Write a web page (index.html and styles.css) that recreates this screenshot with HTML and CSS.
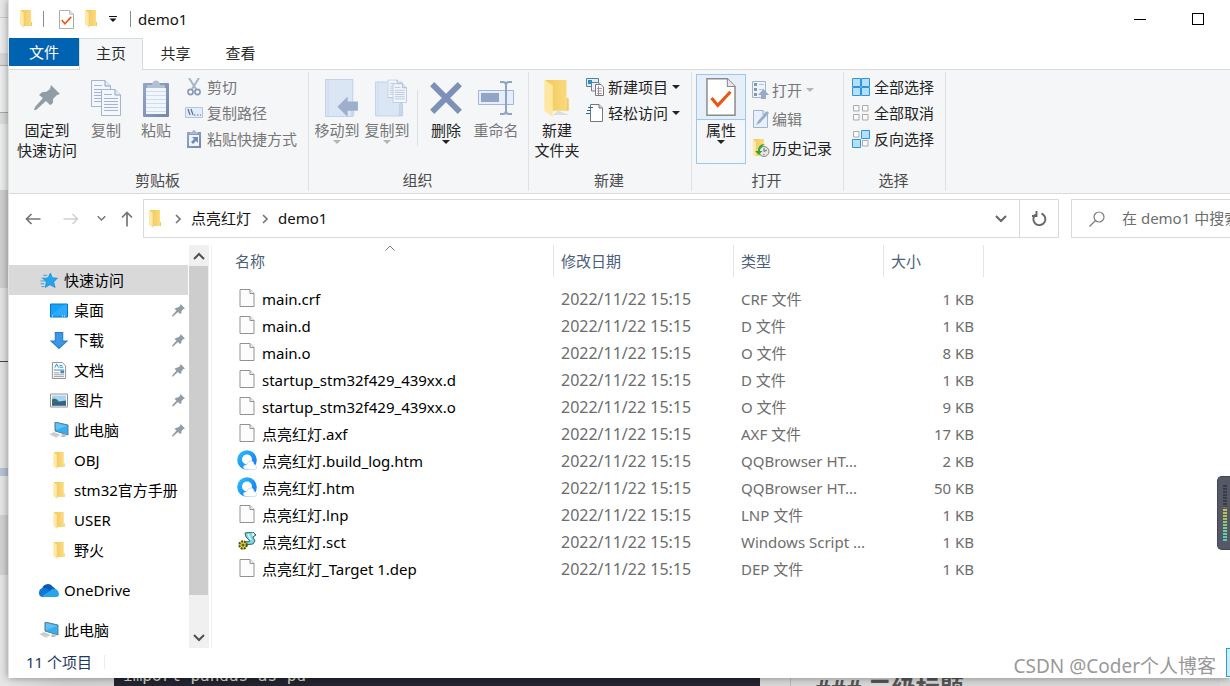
FILE: index.html
```html
<!DOCTYPE html>
<html lang="zh-CN">
<head>
<meta charset="utf-8">
<title>demo1</title>
<link rel="stylesheet" href="styles.css">
</head>
<body>
<svg class="sprite" aria-hidden="true">
  <defs>
    <linearGradient id="gold" x1="0" x2="1"><stop offset="0" stop-color="#f0c95c"/><stop offset="1" stop-color="#fbdb80"/></linearGradient>
    <linearGradient id="steel" x1="0" y1="0" x2="1" y2="1"><stop offset="0" stop-color="#93a6ca"/><stop offset="1" stop-color="#7488ae"/></linearGradient>
    <linearGradient id="qq" x1="0" y1="0" x2="1" y2="1"><stop offset="0" stop-color="#2fc0fa"/><stop offset="1" stop-color="#1272ec"/></linearGradient>
    <symbol id="folder" viewBox="0 0 14 18"><path d="M2 0H12V16H4Z" fill="url(#gold)"/><path d="M12 12h1v4h-1z" fill="#f0cb62"/><path d="M1 0L5 3V18L1 15Z" fill="#ffe9a8"/><path d="M5 3V17" stroke="#edca69" stroke-width=".6"/></symbol>
    <symbol id="pin" viewBox="0 0 26 26"><path d="M17 0L26 9L23 10L19 14Q20 19 16 20L12 16L2 25L0 25L1 22L9 13L5 10Q8 6 12 7L16 4Z" fill="#929ca4"/></symbol>
    <symbol id="checkdoc" viewBox="0 0 28 36"><path d="M.7.7H20L27.3 8V35.3H.7Z" fill="#fff" stroke="#8a8a8a" stroke-width="1.4"/><path d="M20 .7V8H27.3" fill="#e6e6e6" stroke="#8a8a8a"/><path d="M5 19L11 26L23 13" fill="none" stroke="#ea5712" stroke-width="3"/></symbol>
    <symbol id="page" viewBox="0 0 20 27"><path d="M.5.5H14L19.500 6V26.500H.5Z" fill="#f4f8fe" stroke="#a4b3ce"/><path d="M14 .5V6H19.500" fill="#e3ebf7" stroke="#8ea0c2"/><path d="M3 5.500H11M3 9.500H17M3 12.500H17M3 15.500H17M3 18.500H17M3 21.500H17" stroke="#a3b4d2"/></symbol>
    <symbol id="copy" viewBox="0 0 30 36"><use href="#page" width="20" height="27"/><use href="#page" x="10" y="9" width="20" height="27"/></symbol>
    <symbol id="paste" viewBox="0 0 26 37"><rect y="3" width="26" height="34" rx="1" fill="url(#steel)"/><path d="M3 8H23V34H3Z" fill="#f2f7fe"/><path d="M3 11.500H23M3 15.500H23M3 19.500H23M3 23.500H23M3 27.500H23M3 31.500H23" stroke="#cddcf1"/><path d="M4 8V5H9C9 -1 17 -1 17 5H22V8Z" fill="#b3bfd4"/></symbol>
    <symbol id="cut" viewBox="0 0 14 18"><path d="M2 0L9 11M12 0L5 11" stroke="#a6b3c9" stroke-width="2" fill="none"/><circle cx="3.500" cy="14" r="2.600" fill="none" stroke="#8798b9" stroke-width="1.600"/><circle cx="10.500" cy="14" r="2.600" fill="none" stroke="#8798b9" stroke-width="1.600"/></symbol>
    <symbol id="path" viewBox="0 0 18 12"><path d="M.5.5H17.500V10.500H.5Z" fill="#e2edfb" stroke="#b5c3dc"/><path d="M3 2L5 8M6 2L8 8" stroke="#5d6d8d" stroke-width="1.200"/><path d="M9 8h1.500M12 8h1.500M15 8h1" stroke="#5d6d8d"/></symbol>
    <symbol id="shortcut" viewBox="0 0 14 18"><rect y="2" width="14" height="16" fill="url(#steel)"/><path d="M2 5H12V16H2Z" fill="#eef5fe"/><path d="M3 4V2H5Q7 -2 9 2H11V4Z" fill="#a9b7d0"/><path d="M5 7H11V13L9 11L6 14L4 12L7 9Z" fill="#758bb2"/></symbol>
    <symbol id="moveto" viewBox="0 0 32 37"><path d="M.5.5H27V36.500H.5Z" fill="#dbe6f5" stroke="#c3d2e8"/><path d="M3 1V36" stroke="#ccdaee"/><path d="M25 36V24Q27 20 28.500 24V36Z" fill="#c9d7eb"/><path d="M12 27L22 17V22H32V31H22V37Z" fill="#9fafcb"/></symbol>
    <symbol id="copyto" viewBox="0 0 34 38"><path d="M.5 2.500H28V37.500H.5Z" fill="#dbe6f5" stroke="#c3d2e8"/><path d="M3 3V37" stroke="#ccdaee"/><path d="M25 37V26Q27 22 28.500 26V37Z" fill="#c9d7eb" stroke="#b6c5de" stroke-width=".5"/><use href="#page" x="13" width="14" height="19"/><use href="#page" x="18" y="4" width="15" height="20"/></symbol>
    <symbol id="delete" viewBox="0 0 32 32"><path d="M3 3L29 29M29 3L3 29" stroke="#7d91b6" stroke-width="5.500"/></symbol>
    <symbol id="rename" viewBox="0 0 36 34"><path d="M.5 9.500H35.500V23.500H.5Z" fill="#e5effb" stroke="#a5b6d4"/><path d="M3 12H21V21H3Z" fill="#93a5c6"/><path d="M22 1H25Q28 1 28 4Q28 1 31 1H34M28 4V30M22 33H25Q28 33 28 30Q28 33 31 33H34" stroke="#8fa2c4" stroke-width="2" fill="none"/></symbol>
    <symbol id="newfolder" viewBox="0 0 26 36"><path d="M14 30L25 34H9Z" fill="#dedede"/><path d="M2 1H22V28L24 19V30H9Z" fill="url(#gold)"/><path d="M22 18h2v12h-2z" fill="#eecb67"/><path d="M1 1L9 6V36L1 30Z" fill="#ffe7a0"/></symbol>
    <symbol id="newitem" viewBox="0 0 18 18"><path d="M.5.5H12.500V8.500H.5Z" fill="#d7f0fc" stroke="#5c7f97"/><path d="M2 2h4v4H2z" fill="#3189bd"/><path d="M5.500 4.500H13V13H5.500Z" fill="#e8f1f8" stroke="#70808c"/><path d="M9.500 6.500H15L17.500 9V17.500H9.500Z" fill="#fff" stroke="#777"/><path d="M11 10.500H16M11 13H16M11 15.500H16" stroke="#cf8d92"/><path d="M12.500 8V17" stroke="#7798c2"/></symbol>
    <symbol id="easy" viewBox="0 0 18 18"><path d="M4.500.5H13L16.500 4V17.500H4.500Z" fill="#fff" stroke="#777"/><path d="M13 .5V4H16.500" fill="#ddd" stroke="#777"/><path d="M2 3.500H7M1 6.500H5M0 9.500H4" stroke="#1f6ba5" stroke-width="1.200"/></symbol>
    <symbol id="open" viewBox="0 0 18 18"><path d="M.5.5H13.500V16.500H.5Z" fill="#eef4fc" stroke="#a4b2cc"/><path d="M2 2h3v3H2zM2 7h3v3H2zM2 12h3v3H2z" fill="#8396ba"/><path d="M7 3.500H12M7 8.500H11" stroke="#b3c0d8"/><path d="M11.500 8L17 14H14V18H9V14H6Z" fill="#98a9c9"/></symbol>
    <symbol id="edit" viewBox="0 0 16 18"><path d="M.5.5H10L14.500 5V17.500H.5Z" fill="#e7f0fb" stroke="#a2b3d0"/><path d="M10 .5V5H14.500" fill="#d5e1f3" stroke="#a2b3d0"/><path d="M3 15L5 11L14 1L16 3L7 13Z" fill="#9bacc9"/></symbol>
    <symbol id="history" viewBox="0 0 18 18"><path d="M1 0H12V17H3Z" fill="url(#gold)"/><path d="M1 0L4 3V18L1 16Z" fill="#ffe9a8"/><circle cx="12" cy="12.500" r="5" fill="#e6e6e6" stroke="#858585"/><path d="M12 9V12.500L15 11M9 12.500h1M12 16v-1" stroke="#666" fill="none"/><path d="M13 5Q6 5 6 12H3L7 16L10 12H8Q8 8 13 5Z" fill="#2aa83a"/></symbol>
    <symbol id="all" viewBox="0 0 18 18"><path d="M.5.5H8.500V8.500H.5ZM9.500.5H17.500V8.500H9.500ZM.5 9.500H8.500V17.500H.5ZM9.500 9.500H17.500V17.500H9.500Z" fill="#b5e0fb" stroke="#2e95dc"/></symbol>
    <symbol id="none" viewBox="0 0 18 18"><path d="M1.500 1.500H7V7H1.500ZM10.500 1.500H16V7H10.500ZM1.500 10.500H7V16H1.500ZM10.500 10.500H16V16H10.500Z" fill="#fafafa" stroke="#aaa"/></symbol>
    <symbol id="invert" viewBox="0 0 18 18"><path d="M1.500 1.500H7V7H1.500ZM10.500 10.500H16V16H10.500Z" fill="#fafafa" stroke="#aaa"/><path d="M9.500.5H17.500V8.500H9.500ZM.5 9.500H8.500V17.500H.5Z" fill="#b5e0fb" stroke="#2e95dc"/></symbol>
    <symbol id="star" viewBox="0 0 18 16"><path d="M10.500 0L12.500 5L18 5.500L14 9.500L15.500 15.500L10 12.500L5 15.500L6 10L3 6L8 5Z" fill="#22a4ee" stroke="#1685cf" stroke-width=".7"/><path d="M3 2.500H7M1 5.500H5M0 8.500H4M0 11.500H4M1 14.500H4" stroke="#2a9be0"/></symbol>
    <symbol id="desktop" viewBox="0 0 18 14"><path d="M.5.5H17.500V13.500H.5Z" fill="#17a2f9" stroke="#0676c8"/><path d="M1 12L14 1H17V12Z" fill="#37b2fb" opacity=".6"/><path d="M2 12.500H4M12 12.500H16" stroke="#fff" stroke-dasharray="1 1"/></symbol>
    <symbol id="download" viewBox="0 0 16 16"><path d="M4.500.5H11.500V8.500H15.500L8 15.500L.5 8.500H4.500Z" fill="#3997e5" stroke="#2b7cc6"/></symbol>
    <symbol id="document" viewBox="0 0 15 18"><path d="M.5.5H11L14.500 4V17.500H.5Z" fill="#fff" stroke="#8d8d8d"/><path d="M3 6L5 2L7 6M8 3.500H11M8 5.500H12M2 8.500H13" stroke="#238ccd" fill="none"/><path d="M2 11.500H8M2 13.500H13M2 15.500H13" stroke="#9a9a9a"/><path d="M9 9h4v3H9z" fill="#3c8cc0"/></symbol>
    <symbol id="picture" viewBox="0 0 18 14"><path d="M.5.5H17.500V13.500H.5Z" fill="#fff" stroke="#929292"/><path d="M2 2H16V12H2Z" fill="#a7d3f5"/><path d="M2 6Q5 3 9 8L16 7V12H2Z" fill="#396e70"/><path d="M2 10L16 8V12H2Z" fill="#35608e"/></symbol>
    <symbol id="pc" viewBox="0 0 20 17"><path d="M6 0L19 3V13L6 9Z" fill="#35afef" stroke="#627b8c"/><path d="M7 1L18 4L7 8Z" fill="#7bd0fa" opacity=".6"/><path d="M13 12L12 15L16 15L17 13Z" fill="#b6bfc6"/><path d="M0 12L5 10L12 13L7 16Z" fill="#d5dade"/><path d="M2 12L8 14M4 11L10 13" stroke="#aab1b6" stroke-width=".6"/></symbol>
    <symbol id="cloud" viewBox="0 0 20 13"><path d="M3 5A6 6 0 0 1 14 3Q17 4 17 8H2Z" fill="#0a5bb5"/><path d="M0 9Q0 4 5 4Q9 4 13 9L6 13H4Q0 13 0 9Z" fill="#0f78d4"/><path d="M3 12L11 7Q13 4 17 5Q20 7 20 10Q20 13 17 13H5Z" fill="#28a5ea"/></symbol>
    <symbol id="file" viewBox="0 0 15 18"><path d="M.5.5H10.500L14.500 4.500V17.500H.5Z" fill="#fcfcfc" stroke="#929292"/><path d="M10.500.5V4.500H14.500" fill="#eee" stroke="#929292"/></symbol>
    <symbol id="browser" viewBox="0 0 20 20"><circle cx="10" cy="10" r="9.800" fill="url(#qq)"/><circle cx="10" cy="9.500" r="5" fill="#fff"/><path d="M9 19.600Q6 19 6.500 16.500Q7 14.500 9.500 15Q11 10.500 14.500 11Q17 11.500 17 14.500Q19.700 15 19.600 17.500Q19.300 19.500 17 19.600Z" fill="#fff" stroke="#b4d5fa" stroke-width=".7"/></symbol>
    <symbol id="script" viewBox="0 0 18 18"><path d="M7 1L15 0L18 3L15 5L17 9L15 12L7 13L8 10L12 9L8 5Z" fill="#7bd7dc" stroke="#27585d" stroke-width=".9"/><path d="M10 2L13 8M15 1V4" stroke="#eaffff" stroke-width="1.500"/><circle cx="5" cy="13" r="3.700" fill="#e4db30" stroke="#4d4a13" stroke-width="2" stroke-dasharray="2 1"/><circle cx="5" cy="13" r="1.500" fill="#675f17"/></symbol>
    <symbol id="left" viewBox="0 0 16 12"><path d="M15.500 6H1.500M6.500 1L1.500 6L6.500 11" fill="none" stroke="currentColor" stroke-width="1.700"/></symbol>
    <symbol id="right" viewBox="0 0 16 12"><path d="M.5 6H14.500M9.500 1L14.500 6L9.500 11" fill="none" stroke="currentColor" stroke-width="1.500"/></symbol>
    <symbol id="up" viewBox="0 0 12 16"><path d="M6 15.500V1.500M1 6.500L6 1.500L11 6.500" fill="none" stroke="currentColor" stroke-width="1.700"/></symbol>
    <symbol id="chevron" viewBox="0 0 12 8"><path d="M1 1L6 6L11 1" fill="none" stroke="currentColor" stroke-width="2"/></symbol>
    <symbol id="thin-up" viewBox="0 0 10 6"><path d="M.5 5.500L5 1L9.500 5.500" fill="none" stroke="currentColor"/></symbol>
    <symbol id="crumb" viewBox="0 0 6 10"><path d="M1 1L5 5L1 9" fill="none" stroke="currentColor" stroke-width="1.600"/></symbol>
    <symbol id="refresh" viewBox="0 0 16 16"><path d="M10.500 2.500A6 6 0 1 1 4.500 3.500M5.500 0V5H1" fill="none" stroke="currentColor" stroke-width="1.900"/></symbol>
    <symbol id="search" viewBox="0 0 16 16"><circle cx="10" cy="6" r="5" fill="none" stroke="#7c7c7c" stroke-width="1.200"/><path d="M6.500 9.500L.5 15.500" stroke="#7c7c7c" stroke-width="1.200"/></symbol>
    <symbol id="menu" viewBox="0 0 8 6"><path d="M0 .5H8" stroke="currentColor"/><path d="M.5 2.500H7.500L4 6Z" fill="currentColor"/></symbol>
  </defs>
</svg>

<div class="backdrop" aria-hidden="true">
  <div class="edge"></div>
  <div class="code-strip"><span>import pandas as pd</span></div>
  <div class="note-strip"><span>### 二级标题</span></div>
</div>

<main class="window">
  <header class="titlebar">
    <svg class="i-folder"><use href="#folder"/></svg>
    <span class="bar"></span>
    <button class="plain" aria-label="属性"><svg class="i-tick"><use href="#checkdoc"/></svg></button>
    <button class="plain" aria-label="新建文件夹"><svg class="i-folder"><use href="#folder"/></svg></button>
    <button class="plain" aria-label="自定义"><svg class="i-menu"><use href="#menu"/></svg></button>
    <span class="bar"></span>
    <h1 class="title">demo1</h1>
    <div class="controls">
      <button class="plain" aria-label="最小化"><span class="minimise"></span></button>
      <button class="plain" aria-label="最大化"><span class="maximise"></span></button>
    </div>
  </header>

  <nav class="tabs">
    <button class="tab tab-file">文件</button>
    <button class="tab tab-on">主页</button>
    <button class="tab">共享</button>
    <button class="tab">查看</button>
  </nav>

  <section class="ribbon">
    <div class="group g-clip">
      <div class="tools">
        <button class="big wide"><span class="pic"><svg class="i-pin"><use href="#pin"/></svg></span>固定到<br>快速访问</button>
        <button class="big off"><span class="pic"><svg class="i-copy"><use href="#copy"/></svg></span>复制</button>
        <button class="big off"><span class="pic"><svg class="i-paste"><use href="#paste"/></svg></span>粘贴</button>
        <div class="stack">
          <button class="small off"><svg><use href="#cut"/></svg>剪切</button>
          <button class="small off"><svg><use href="#path"/></svg>复制路径</button>
          <button class="small off"><svg><use href="#shortcut"/></svg>粘贴快捷方式</button>
        </div>
      </div>
      <div class="caption">剪贴板</div>
    </div>
    <div class="group g-org">
      <div class="tools">
        <button class="big off"><span class="pic"><svg class="i-target"><use href="#moveto"/></svg></span>移动到<i class="caret"></i></button>
        <button class="big off"><span class="pic"><svg class="i-target"><use href="#copyto"/></svg></span>复制到<i class="caret"></i></button>
        <span class="split"></span>
        <button class="big"><span class="pic"><svg class="i-del"><use href="#delete"/></svg></span>删除<i class="caret"></i></button>
        <button class="big off"><span class="pic"><svg class="i-big"><use href="#rename"/></svg></span>重命名</button>
      </div>
      <div class="caption">组织</div>
    </div>
    <div class="group g-new">
      <div class="tools">
        <button class="big"><span class="pic"><svg class="i-big"><use href="#newfolder"/></svg></span>新建<br>文件夹</button>
        <div class="stack">
          <button class="small"><svg><use href="#newitem"/></svg>新建项目<i class="caret"></i></button>
          <button class="small"><svg><use href="#easy"/></svg>轻松访问<i class="caret"></i></button>
        </div>
      </div>
      <div class="caption">新建</div>
    </div>
    <div class="group g-open">
      <div class="tools">
        <button class="big hot"><span class="pic"><svg class="i-big"><use href="#checkdoc"/></svg></span>属性<i class="caret"></i></button>
        <div class="stack loose">
          <button class="small off"><svg><use href="#open"/></svg>打开<i class="caret"></i></button>
          <button class="small off"><svg><use href="#edit"/></svg>编辑</button>
          <button class="small"><svg><use href="#history"/></svg>历史记录</button>
        </div>
      </div>
      <div class="caption">打开</div>
    </div>
    <div class="group g-select">
      <div class="tools">
        <div class="stack">
          <button class="small"><svg><use href="#all"/></svg>全部选择</button>
          <button class="small"><svg><use href="#none"/></svg>全部取消</button>
          <button class="small"><svg><use href="#invert"/></svg>反向选择</button>
        </div>
      </div>
      <div class="caption">选择</div>
    </div>
  </section>

  <section class="location">
    <div class="history">
      <button class="plain" aria-label="后退"><svg class="i-across"><use href="#left"/></svg></button>
      <button class="plain faint" aria-label="前进"><svg class="i-across"><use href="#right"/></svg></button>
      <button class="plain" aria-label="最近"><svg class="i-down"><use href="#chevron"/></svg></button>
      <button class="plain" aria-label="向上"><svg class="i-up"><use href="#up"/></svg></button>
    </div>
    <div class="address">
      <svg class="i-folder"><use href="#folder"/></svg>
      <svg class="i-crumb"><use href="#crumb"/></svg>
      <a href="#">点亮红灯</a>
      <svg class="i-crumb"><use href="#crumb"/></svg>
      <a href="#">demo1</a>
      <button class="plain drop" aria-label="展开"><svg class="i-drop"><use href="#chevron"/></svg></button>
      <button class="plain reload" aria-label="刷新"><svg class="i-small"><use href="#refresh"/></svg></button>
    </div>
    <label class="search"><svg class="i-small"><use href="#search"/></svg><input type="text" aria-label="搜索" placeholder="在 demo1 中搜索"></label>
  </section>

  <section class="content">
    <nav class="tree">
      <a class="node root on" href="#"><svg class="inset"><use href="#star"/></svg>快速访问</a>
      <a class="node" href="#"><svg class="inset"><use href="#desktop"/></svg>桌面<svg class="pinned"><use href="#pin"/></svg></a>
      <a class="node" href="#"><svg><use href="#download"/></svg>下载<svg class="pinned"><use href="#pin"/></svg></a>
      <a class="node" href="#"><svg><use href="#document"/></svg>文档<svg class="pinned"><use href="#pin"/></svg></a>
      <a class="node" href="#"><svg class="inset"><use href="#picture"/></svg>图片<svg class="pinned"><use href="#pin"/></svg></a>
      <a class="node" href="#"><svg><use href="#pc"/></svg>此电脑<svg class="pinned"><use href="#pin"/></svg></a>
      <a class="node" href="#"><svg><use href="#folder"/></svg>OBJ</a>
      <a class="node" href="#"><svg><use href="#folder"/></svg>stm32官方手册</a>
      <a class="node" href="#"><svg><use href="#folder"/></svg>USER</a>
      <a class="node" href="#"><svg><use href="#folder"/></svg>野火</a>
      <a class="node root apart" href="#"><svg><use href="#cloud"/></svg>OneDrive</a>
      <a class="node root apart" href="#"><svg><use href="#pc"/></svg>此电脑</a>
    </nav>
    <div class="scroll">
      <button class="plain" aria-label="向上滚动"><svg class="i-drop flip"><use href="#chevron"/></svg></button>
      <div class="track"><div class="thumb"></div></div>
      <button class="plain" aria-label="向下滚动"><svg class="i-drop"><use href="#chevron"/></svg></button>
    </div>
    <div class="files">
      <table>
        <colgroup><col class="c-name"><col class="c-date"><col class="c-type"><col class="c-size"></colgroup>
        <thead><tr><th>名称<svg class="sort"><use href="#thin-up"/></svg></th><th>修改日期</th><th>类型</th><th>大小</th></tr></thead>
        <tbody>
          <tr><td><svg><use href="#file"/></svg>main.crf</td><td class="date">2022/11/22 15:15</td><td>CRF 文件</td><td>1 KB</td></tr>
          <tr><td><svg><use href="#file"/></svg>main.d</td><td class="date">2022/11/22 15:15</td><td>D 文件</td><td>1 KB</td></tr>
          <tr><td><svg><use href="#file"/></svg>main.o</td><td class="date">2022/11/22 15:15</td><td>O 文件</td><td>8 KB</td></tr>
          <tr><td><svg><use href="#file"/></svg>startup_stm32f429_439xx.d</td><td class="date">2022/11/22 15:15</td><td>D 文件</td><td>1 KB</td></tr>
          <tr><td><svg><use href="#file"/></svg>startup_stm32f429_439xx.o</td><td class="date">2022/11/22 15:15</td><td>O 文件</td><td>9 KB</td></tr>
          <tr><td><svg><use href="#file"/></svg>点亮红灯.axf</td><td class="date">2022/11/22 15:15</td><td>AXF 文件</td><td>17 KB</td></tr>
          <tr><td><svg class="full"><use href="#browser"/></svg>点亮红灯.build_log.htm</td><td class="date">2022/11/22 15:15</td><td>QQBrowser HT...</td><td>2 KB</td></tr>
          <tr><td><svg class="full"><use href="#browser"/></svg>点亮红灯.htm</td><td class="date">2022/11/22 15:15</td><td>QQBrowser HT...</td><td>50 KB</td></tr>
          <tr><td><svg><use href="#file"/></svg>点亮红灯.lnp</td><td class="date">2022/11/22 15:15</td><td>LNP 文件</td><td>1 KB</td></tr>
          <tr><td><svg><use href="#script"/></svg>点亮红灯.sct</td><td class="date">2022/11/22 15:15</td><td>Windows Script ...</td><td>1 KB</td></tr>
          <tr><td><svg><use href="#file"/></svg>点亮红灯_Target 1.dep</td><td class="date">2022/11/22 15:15</td><td>DEP 文件</td><td>1 KB</td></tr>
        </tbody>
      </table>
    </div>
  </section>

  <footer class="status"><span>11 个项目</span></footer>
</main>

<div class="meter" aria-hidden="true"><div class="levels"></div></div>
<div class="corner" aria-hidden="true"></div>
<div class="watermark">CSDN @Coder个人博客</div>
</body>
</html>
```

FILE: styles.css
```css
* { box-sizing: border-box; }
body {
  margin: 0;
  height: 100vh;
  overflow: hidden;
  position: relative;
  background: #e4e4e4;
  color: #111;
  font: 15px/20px "Noto Sans", "Noto Sans CJK SC", sans-serif;
}
svg { display: block; flex: none; }
a { color: inherit; text-decoration: none; }
button { font: inherit; color: inherit; background: none; border: 0; padding: 0; margin: 0; }
.sprite { position: absolute; width: 0; height: 0; }
.plain { display: flex; align-items: center; justify-content: center; }

/* Desktop behind the window */
.backdrop { position: absolute; inset: 0; background: linear-gradient(90deg, #e8e8e8, #d4d4d4 60px, #dcdcdc); }
.edge {
  position: absolute; left: 0; top: 0; bottom: 0; width: 8px;
  background: linear-gradient(#e9e9e9 0 17px, #cfcfcf 17px 18px, #ececec 18px 53px, #d9d9d9 53px 65px, #aaa 65px 66px, #ededed 66px 112px, #aaa 112px 113px, #dcdcdc 113px 124px, #ececec 124px 190px, #cfcfcf 190px 288px, #e3e3e3 288px 361px, #444 361px 362px, #e3e3e3 362px 468px, #b5c3d6 468px 476px, #e6e6e6 476px 515px, #d2d2d2 515px 575px, #e6e6e6 575px);
}
.code-strip, .note-strip { position: absolute; bottom: 0; height: 8px; overflow: hidden; }
.code-strip { left: 114px; width: 646px; background: #23242f; color: #d8d8c8; font: 16px/20px "DejaVu Sans Mono", monospace; }
.note-strip { left: 790px; right: 10px; border-left: 1px solid #bbb; background: #d8d8d8; color: #555; font-weight: 700; font-size: 24px; }
.code-strip span, .note-strip span { position: absolute; white-space: nowrap; }
.code-strip span { left: 9px; bottom: 0; }
.note-strip span { left: 24px; top: 0; }

.window {
  position: relative;
  display: flex;
  flex-direction: column;
  height: calc(100% - 8px);
  margin-left: 8px;
  background: #fff;
  border-left: 1px solid #e2e2e2;
  box-shadow: 0 0 8px rgba(0, 0, 0, .4);
}

/* Title bar */
.titlebar { display: flex; align-items: center; height: 38px; padding-left: 10px; flex: none; }
.bar { width: 1px; height: 16px; background: #8a8a8a; margin: 0 7px 0 10px; }
.i-folder { width: 14px; height: 18px; }
.i-tick { width: 15px; height: 19px; margin: 0 10px 0 8px; }
.i-menu { width: 8px; height: 6px; margin-left: 11px; }
.titlebar .plain + .bar { margin-left: 13px; }
.title { margin: 0; font-size: 15px; font-weight: 400; }
.controls { display: flex; margin-left: auto; }
.controls .plain { width: 58px; height: 38px; }
.controls .plain:last-child { margin-right: 3px; }
.minimise { width: 12px; height: 1px; background: #000; }
.maximise { width: 12px; height: 12px; border: 1px solid #000; }

/* Tabs */
.tabs { display: flex; height: 32px; flex: none; border-bottom: 1px solid #dadbdc; color: #2a2a2a; }
.tab { width: 65px; height: 30px; }
.tab-file { width: 70px; height: 28px; background: #0063b1; color: #fff; }
.tab-on { width: 64px; height: 32px; padding-bottom: 4px; background: #f5f6f7; border: solid #dadbdc; border-width: 1px 1px 0; }

/* Ribbon */
.ribbon { display: flex; flex: none; height: 124px; padding: 2px 0; background: #f5f6f8; border-bottom: 1px solid #dadbdc; }
.group { flex: none; display: flex; flex-direction: column; justify-content: space-between; border-right: 1px solid #e1e2e4; color: #222; }
.g-clip { width: 300px; }
.g-org { width: 220px; }
.g-new { width: 163px; }
.g-open { width: 152px; }
.g-select { width: 102px; }
.tools { display: flex; align-items: flex-start; padding-top: 2px; }
.caption { text-align: center; color: #4b4b4b; padding: 0 2px 1px 0; }
.big { width: 50px; padding-top: 2px; text-align: center; white-space: nowrap; display: flex; flex-direction: column; align-items: center; }
.big.wide { width: 72px; padding-left: 4px; }
.pic { height: 44px; display: flex; align-items: center; }
.off { color: #777; }
.i-pin { width: 26px; height: 26px; }
.i-copy { width: 30px; height: 36px; }
.i-paste { width: 26px; height: 37px; }
.i-big { width: 36px; height: 38px; }
.i-target { width: 33px; height: 38px; margin-left: 8px; }
.i-del { width: 34px; height: 34px; }
.caret { width: 0; height: 0; border: solid transparent; border-width: 4px 4px 0; border-top-color: #222; }
.off .caret { border-top-color: #b5b5b5; }
.split { width: 1px; height: 56px; margin: 16px 3px 0 5px; background: #dfe0e2; }
.stack { padding: 0 0 0 4px; }
.small { display: flex; align-items: center; gap: 4px; height: 26px; white-space: nowrap; }
.small svg { width: 18px; height: 18px; }
.loose { padding: 1px 0 0 6px; }
.loose .small { height: 29px; gap: 2px; }
.loose .caret { margin-left: 2px; }
.g-org .tools { padding-left: 3px; }
.g-new .tools { padding-left: 3px; }
.g-open .tools { padding-left: 4px; }
.g-select .tools { padding-left: 4px; }
.hot { border: 1px solid #99c9f2; height: 90px; padding-top: 0; }
.hot .pic { width: 100%; justify-content: center; height: 45px; background: #e6eff8; border-bottom: 1px solid #99c9f2; }

/* Location bar */
.location { flex: none; display: grid; grid-template-columns: 134px 1fr 159px; padding: 5px 0 7px; }
.history { display: flex; align-items: center; color: #757575; padding-left: 16px; }
.faint { color: #d0d0d0; }
.i-across { width: 16px; height: 12px; margin-right: 22px; }
.faint .i-across { margin-right: 18px; }
.i-down { width: 9px; height: 7px; margin-right: 15px; }
.i-up { width: 12px; height: 16px; }
.address { height: 39px; display: flex; align-items: center; border: 1px solid #d9d9d9; padding-left: 4px; margin-right: 12px; }
.address a, .search input { padding-bottom: 2px; }
.i-crumb { width: 6px; height: 10px; color: #777; margin: 0 10px 0 13px; }
.address a + .i-crumb { margin-left: 11px; }
.drop { margin-left: auto; width: 36px; height: 100%; color: #666; }
.i-drop { width: 12px; height: 8px; }
.reload { width: 39px; height: 100%; border-left: 1px solid #d9d9d9; color: #666; }
.i-small { width: 16px; height: 16px; }
.search { display: flex; align-items: center; border: solid #d9d9d9; border-width: 1px 0 1px 1px; padding-left: 17px; gap: 17px; }
.search input { flex: 1; min-width: 0; border: 0; padding: 0 0 2px; background: none; font: inherit; }
.search input::placeholder { color: #6d6d6d; }

/* Folder tree and file list */
.content { flex: 1; min-height: 0; display: grid; grid-template-columns: 180px 20px 1fr; }
.tree { padding-top: 20px; overflow: hidden; }
.node { display: flex; align-items: center; gap: 5px; height: 30px; padding-left: 40px; color: #000; white-space: nowrap; }
.node svg { width: 20px; height: 17px; }
.node .inset { padding: 1px; }
.root { padding-left: 30px; }
.on { background: #d9d9d9; margin-right: 1px; }
.apart { margin-top: 10px; }
.node .pinned { width: 13px; height: 13px; margin: 0 4px 0 auto; }
.scroll { display: flex; flex-direction: column; background: #f0f0f0; color: #505050; }
.scroll .plain { height: 21px; }
.flip { transform: rotate(180deg); }
.track { flex: 1; }
.thumb { height: 91%; background: #cdcdcd; margin-right: 1px; }
.files { border-left: 1px solid #f2f2f2; margin-left: 2px; }
table { border-collapse: separate; border-spacing: 0; table-layout: fixed; width: 772px; }
.c-name { width: 342px; }
.c-date { width: 180px; }
.c-type { width: 150px; }
.c-size { width: 100px; }
th { position: relative; height: 32px; padding: 0 0 0 7px; text-align: left; font-weight: 400; color: #4c607a; border-right: 1px solid #e5e5e5; }
th:first-child { padding-left: 23px; }
.sort { position: absolute; left: 50%; top: 0; width: 10px; height: 6px; margin-left: 2px; color: #777; }
tbody::before { content: ""; display: block; height: 8px; }
td { height: 27px; padding: 0 10px 0 7px; color: #6d6d6d; white-space: nowrap; }
td:first-child { display: flex; align-items: center; gap: 5px; padding-left: 25px; color: #000; }
td:last-child { text-align: right; }
.date { font-size: 16px; }
td svg { width: 20px; height: 18px; margin-bottom: 2px; }
td .full { height: 20px; }

.status { flex: none; height: 30px; display: flex; align-items: center; padding: 0 0 2px 17px; color: #1e395b; }
.status span { padding-right: 12px; border-right: 1px solid #ececec; line-height: 14px; }

/* Floating overlays */
.meter { position: absolute; right: 0; top: 476px; width: 13px; height: 74px; padding: 8px 3px 8px 5px; background: #555866; border: 1px solid #444651; border-right: 0; border-radius: 5px 0 0 5px; }
.levels { height: 100%; background: repeating-linear-gradient(transparent 0 2px, #555866 2px 3px), linear-gradient(#3a3c46 0 22px, #d8bd4c 23px, #93cc6c 36px, #51cfc0 56px); }
.corner { position: absolute; right: 0; bottom: 9px; width: 4px; height: 29px; background: #cdeaf8; border: 1px solid #2b9fd2; border-right: 0; }
.watermark { position: absolute; right: 14px; bottom: 8px; font-size: 19px; line-height: 24px; color: #999; }
```
